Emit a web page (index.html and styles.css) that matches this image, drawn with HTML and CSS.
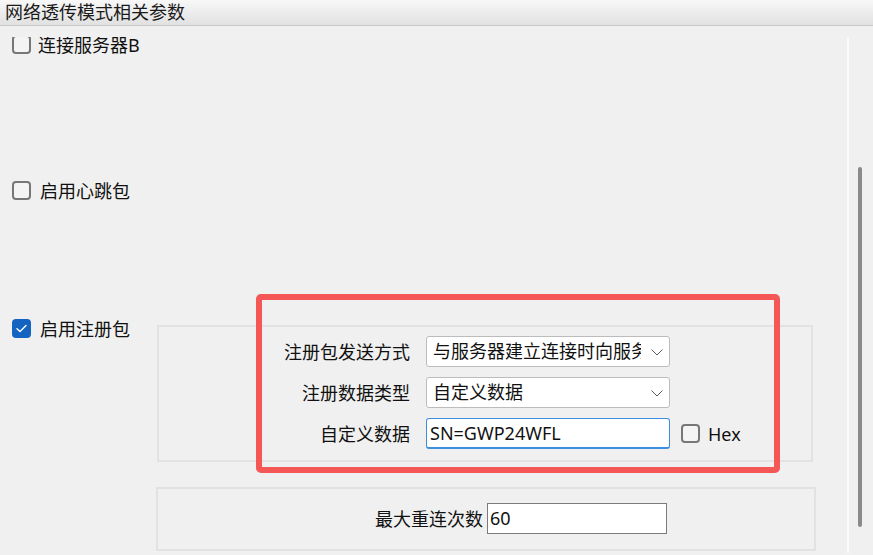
FILE: index.html
```html
<!DOCTYPE html>
<html lang="zh-CN">
<head>
<meta charset="utf-8">
<title>网络透传模式相关参数</title>
<link rel="stylesheet" href="styles.css">
</head>
<body>
<div class="header">网络透传模式相关参数</div>
<div class="panel">
  <div class="viewport">
    <div class="scroll-content">
      <label class="check row-server"><span class="box"></span><span class="check-text">连接服务器B</span></label>
      <label class="check row-heartbeat"><span class="box"></span><span class="check-text">启用心跳包</span></label>
      <div class="option">
        <label class="check option-check">
          <span class="box checked"><svg viewBox="0 0 19 19" width="19" height="19"><polyline points="5,9.8 8,12.6 14,6.6" fill="none" stroke="#ffffff" stroke-width="1.4" stroke-linecap="round" stroke-linejoin="round"/></svg></span>
          <span class="check-text">启用注册包</span>
        </label>
        <div class="group reg-group">
          <span class="field-label">注册包发送方式</span>
          <div class="select">
            <span class="select-text">与服务器建立连接时向服务器发送注册包</span>
            <svg class="chevron" viewBox="0 0 12 7" width="12" height="7"><polyline points="0.5,0.5 6,6 11.5,0.5" fill="none" stroke="#5a5a5a" stroke-width="1"/></svg>
          </div>
          <span></span>

          <span class="field-label">注册数据类型</span>
          <div class="select">
            <span class="select-text">自定义数据</span>
            <svg class="chevron" viewBox="0 0 12 7" width="12" height="7"><polyline points="0.5,0.5 6,6 11.5,0.5" fill="none" stroke="#5a5a5a" stroke-width="1"/></svg>
          </div>
          <span></span>

          <span class="field-label">自定义数据</span>
          <div class="textbox focused">SN=GWP24WFL</div>
          <label class="check hex-check"><span class="box"></span><span class="check-text latin">Hex</span></label>
        </div>
      </div>
      <div class="group retry-group">
        <span class="retry-label">最大重连次数</span>
        <div class="textbox plain">60</div>
      </div>
    </div>
  </div>
  <div class="scrollbar"><div class="thumb"></div></div>
</div>
<div class="highlight"></div>
</body>
</html>
```
FILE: styles.css
```css
* {
  box-sizing: border-box;
}

html, body {
  margin: 0;
  height: 100%;
}

body {
  position: relative;
  background: #f0f0f0;
  color: #111111;
  font-family: "Noto Sans", "Noto Sans CJK SC", sans-serif;
  font-size: 18px;
  overflow: hidden;
}

/* title strip */
.header {
  height: 26px;
  padding-left: 5px;
  line-height: 25px;
  background: linear-gradient(#f8f8f8, #e1e1e1);
  border-bottom: 1px solid #c9c9c9;
  color: #1a1a1a;
}

.panel {
  display: flex;
  height: 529px;
  padding-top: 11px;
}

.viewport {
  width: 847px;
  height: 516px;
  overflow: hidden;
}

.scroll-content {
  margin-top: -2px;
  padding-left: 12px;
}

/* checkboxes */
.check {
  display: flex;
  align-items: center;
  gap: 9px;
  height: 19px;
  line-height: 20px;
  white-space: nowrap;
}

.box {
  flex: none;
  width: 19px;
  height: 19px;
  border: 2px solid #777777;
  border-radius: 4px;
  background: #f4f4f4;
}

.box.checked {
  border: none;
  background: #1563c1;
}

.box.checked svg {
  display: block;
}

.row-server {
  margin-bottom: 127px;
}

.row-server .check-text {
  margin-left: -2px;
  line-height: 15px;
  margin-top: 2px;
}

.row-heartbeat {
  margin-bottom: 119px;
}

.option {
  display: flex;
  align-items: flex-start;
}

.option-check {
  width: 145px;
}

/* group boxes */
.group {
  border: 2px solid #e2e2e2;
}

.reg-group {
  margin-top: 6px;
  width: 656px;
  height: 137px;
  padding: 9px 0 11px 0;
  display: grid;
  grid-template-columns: 267px 244px auto;
  grid-auto-rows: 31px;
  row-gap: 10px;
  align-items: center;
}

.field-label {
  text-align: right;
  padding-right: 16px;
  line-height: 20px;
  white-space: nowrap;
}

.select {
  display: flex;
  align-items: center;
  height: 31px;
  padding-left: 6px;
  background: #ffffff;
  border: 1px solid #bcbcbc;
  border-radius: 3px;
  overflow: hidden;
}

.select-text {
  flex: none;
  width: 208px;
  overflow: hidden;
  white-space: nowrap;
  line-height: 29px;
}

.chevron {
  flex: none;
  margin-left: 10px;
  margin-top: 1px;
}

.textbox {
  height: 31px;
  line-height: 29px;
  background: #ffffff;
  white-space: nowrap;
}

.textbox.focused {
  padding-left: 3px;
  border: 1px solid #3c8fdc;
  border-bottom-width: 2px;
  border-radius: 3px;
  color: #121212;
}

.hex-check {
  margin-left: 11px;
  gap: 8px;
}

.latin {
  font-family: "Noto Sans", sans-serif;
}

.retry-group {
  margin-top: 25px;
  margin-left: 144px;
  width: 660px;
  height: 64px;
  display: flex;
  align-items: center;
  padding-left: 217px;
  padding-bottom: 1px;
}

.retry-label {
  line-height: 20px;
  margin-right: 4px;
  white-space: nowrap;
}

.textbox.plain {
  width: 180px;
  height: 31px;
  padding-left: 2px;
  border: 1px solid #7b7b7b;
}

/* vertical scrollbar */
.scrollbar {
  flex: 1;
  height: 516px;
  border-left: 2px solid #fbfbfb;
  padding-left: 9px;
  padding-top: 130px;
}

.thumb {
  width: 4px;
  height: 360px;
  border-radius: 2px;
  background: #8a8a8a;
}

/* red annotation frame drawn over the form */
.highlight {
  position: absolute;
  left: 256px;
  top: 294px;
  width: 524px;
  height: 179px;
  border: 6px solid #f55656;
  border-radius: 5px;
  pointer-events: none;
}
```
